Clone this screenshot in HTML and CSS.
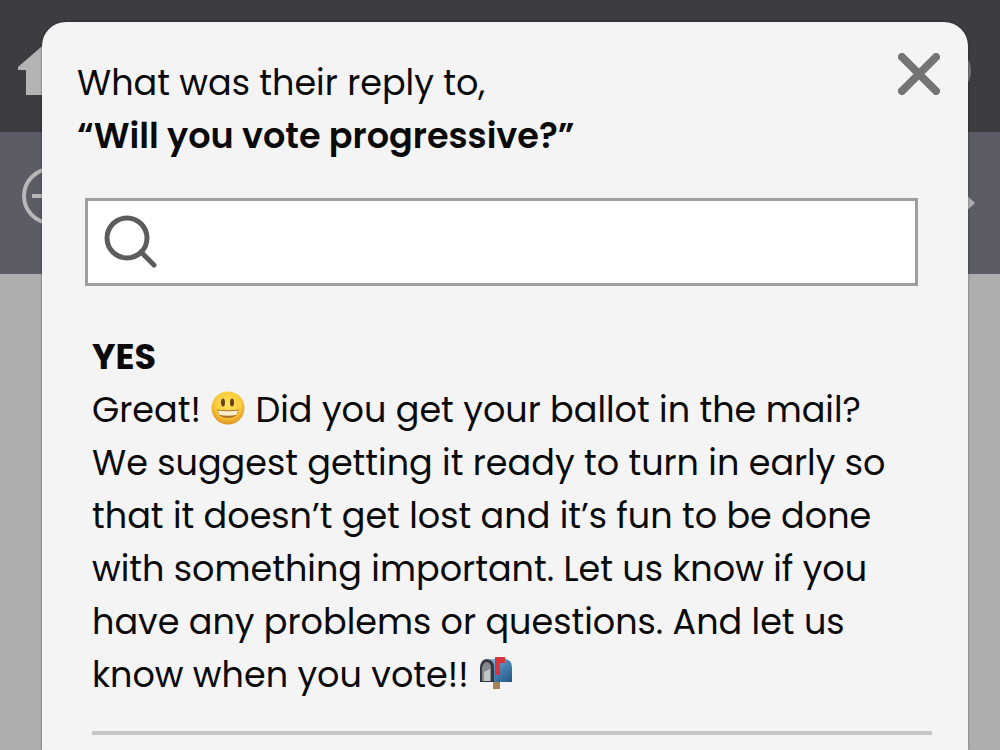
FILE: index.html
```html
<!DOCTYPE html>
<html lang="en">
<head>
  <meta charset="UTF-8">
  <meta name="viewport" content="width=device-width, initial-scale=1.0">
  <title>Reply</title>
  <link rel="stylesheet" href="styles.css">
</head>
<body>
<!-- Page behind the dialog -->
<div class="top-bar">
    <svg class="home-icon" viewBox="0 0 60 60" aria-hidden="true">
        <path d="M30 4 L60 30 V33 H52 V58 H8 V33 H0 V30 Z"/>
    </svg>
    <span class="avatar"></span>
</div>
<div class="sub-bar">
    <svg class="remove-icon" viewBox="0 0 60 60" aria-hidden="true">
        <circle cx="29" cy="30" r="27"/>
        <path d="M10 30 H48"/>
    </svg>
    <svg class="next-icon" viewBox="0 0 20 30" aria-hidden="true">
        <path d="M4 0 L20 15 L4 30 Z"/>
    </svg>
</div>

<!-- Reply dialog -->
<div class="modal" role="dialog" aria-labelledby="modalTitle">
    <div class="modal-header">
        <h1 class="modal-title" id="modalTitle">What was their reply to,<br><strong>“Will you vote progressive?”</strong></h1>
        <button class="close-button" type="button" aria-label="Close">
            <svg viewBox="0 0 42 42" aria-hidden="true">
                <path d="M4 4 L38 38 M38 4 L4 38"/>
            </svg>
        </button>
    </div>

    <label class="search-box">
        <svg class="search-icon" viewBox="0 0 56 56" aria-hidden="true">
            <circle cx="23" cy="24" r="20"/>
            <path d="M37 38 L50 51"/>
        </svg>
        <input type="search" class="search-input" aria-label="Search replies">
    </label>

    <div class="reply">
        <h2 class="reply-title">YES</h2>
        <p class="reply-text">Great!
            <svg class="emoji" viewBox="0 0 34 34" role="img" aria-label="Smiley">
                <defs>
                    <radialGradient id="face" cx="50%" cy="38%" r="62%">
                        <stop offset="0" stop-color="#ffe45c"/>
                        <stop offset="0.65" stop-color="#fbc93a"/>
                        <stop offset="1" stop-color="#de8f22"/>
                    </radialGradient>
                </defs>
                <circle cx="17" cy="17" r="16.5" fill="url(#face)"/>
                <ellipse cx="12" cy="11.5" rx="2" ry="4" fill="#64401b"/>
                <ellipse cx="21" cy="11.5" rx="2" ry="4" fill="#64401b"/>
                <path d="M6 18.500 Q17 20 28 18.500 Q27 27 17 27 Q7 27 6 18.500 Z" fill="#a8742a"/>
                <path d="M7 19.500 Q17 21 27 19.500 Q27 23 25 24 Q17 25.500 9 24 Q7 23 7 19.500 Z" fill="#fbeecb"/>
            </svg>
            Did you get your ballot in the mail? We suggest getting it ready to turn in early so that it doesn’t get lost and it’s fun to be done with something important. Let us know if you have any problems or questions. And let us know when you vote!!
            <svg class="emoji" viewBox="0 0 34 34" role="img" aria-label="Mailbox">
                <defs>
                    <linearGradient id="box" x1="0" y1="0" x2="1" y2="1">
                        <stop offset="0" stop-color="#8fc1e0"/>
                        <stop offset="0.5" stop-color="#4584b4"/>
                        <stop offset="1" stop-color="#245580"/>
                    </linearGradient>
                </defs>
                <path d="M14 24 H21 V33 H14 Z" fill="#a68259"/>
                <path d="M8 3 H26 Q33 4 33 12 V26 H14 Z" fill="url(#box)"/>
                <path d="M1 26 V11 Q2 3 8 3 Q15 4 15 11 V26 Z" fill="#35393f"/>
                <path d="M3 25 V12 Q4 6 8 6 Q12 7 12 12 V25 Z" fill="#85888e"/>
                <path d="M5 25 V16 L11 13 V25 Z" fill="#c4c6c9"/>
                <path d="M16 1 H26 V7 H21 V19 H16 Z" fill="#d9343a"/>
            </svg>
        </p>
    </div>
</div>
</body>
</html>
```

FILE: styles.css
```css
* {
  box-sizing: border-box;
}

body {
  margin: 0;
  min-height: 100vh;
  overflow: hidden;
  background-color: #aeaeae;
  color: #0a0a0a;
  font-family: Poppins, Inter, sans-serif;
  font-size: 35px;
  line-height: 53px;
}

/* Bars behind the dialog */
.top-bar,
.sub-bar {
  display: flex;
  align-items: center;
  justify-content: space-between;
}

.top-bar {
  height: 132px;
  padding: 10px 29px 0 18px;
  background-color: #3c3c41;
}

.sub-bar {
  height: 142px;
  padding: 0 25px 0 22px;
  background-color: #5c5c66;
}

.home-icon {
  width: 60px;
  height: 60px;
  margin-bottom: 8px;
  fill: #b4b4b4;
}

.avatar {
  width: 48px;
  height: 48px;
  border-radius: 50%;
  background-color: #77777a;
}

.remove-icon {
  width: 60px;
  height: 60px;
  margin-bottom: 14px;
  fill: none;
  stroke: #b8b8ba;
  stroke-width: 4;
}

.next-icon {
  width: 20px;
  height: 30px;
  fill: #aeaeb2;
}

/* Dialog */
.modal {
  position: absolute;
  top: 22px;
  right: 32px;
  bottom: 0;
  left: 42px;
  padding: 34px 28px 0 35px;
  overflow: hidden;
  border-radius: 24px 24px 0 0;
  background-color: #f4f4f4;
  box-shadow: 0 0 3px rgba(0, 0, 0, 0.4);
}

.modal-header {
  display: flex;
  align-items: flex-start;
  justify-content: space-between;
}

.modal-title,
.reply-title {
  margin: 0;
  font-size: 35px;
}

.modal-title {
  font-weight: 400;
}

.modal-title strong {
  font-weight: 600;
}

.close-button {
  width: 42px;
  height: 42px;
  margin-top: -3px;
  padding: 0;
  border: none;
  background: none;
  cursor: pointer;
}

.close-button svg {
  display: block;
  stroke: #747474;
  stroke-width: 8;
  stroke-linecap: round;
}

/* Search */
.search-box {
  display: flex;
  align-items: center;
  height: 88px;
  margin: 36px 22px 0 8px;
  padding: 0 16px;
  border: 3px solid #9e9e9e;
  background-color: white;
}

.search-icon {
  flex: none;
  width: 56px;
  height: 56px;
  fill: none;
  stroke: #5c5c5c;
  stroke-width: 5;
  stroke-linecap: round;
}

.search-input {
  flex: 1;
  min-width: 0;
  padding: 0 12px;
  border: none;
  outline: none;
  background: none;
  font: inherit;
}

/* Reply */
.reply {
  margin: 44px 8px 0 15px;
  padding-bottom: 30px;
  border-bottom: 4px solid #c6c6c6;
}

.reply-title {
  font-weight: 700;
}

.reply-text {
  margin: 0;
  padding-right: 32px;
}

.emoji {
  width: 34px;
  height: 34px;
  margin: 0 1px;
  vertical-align: -3px;
}
```
